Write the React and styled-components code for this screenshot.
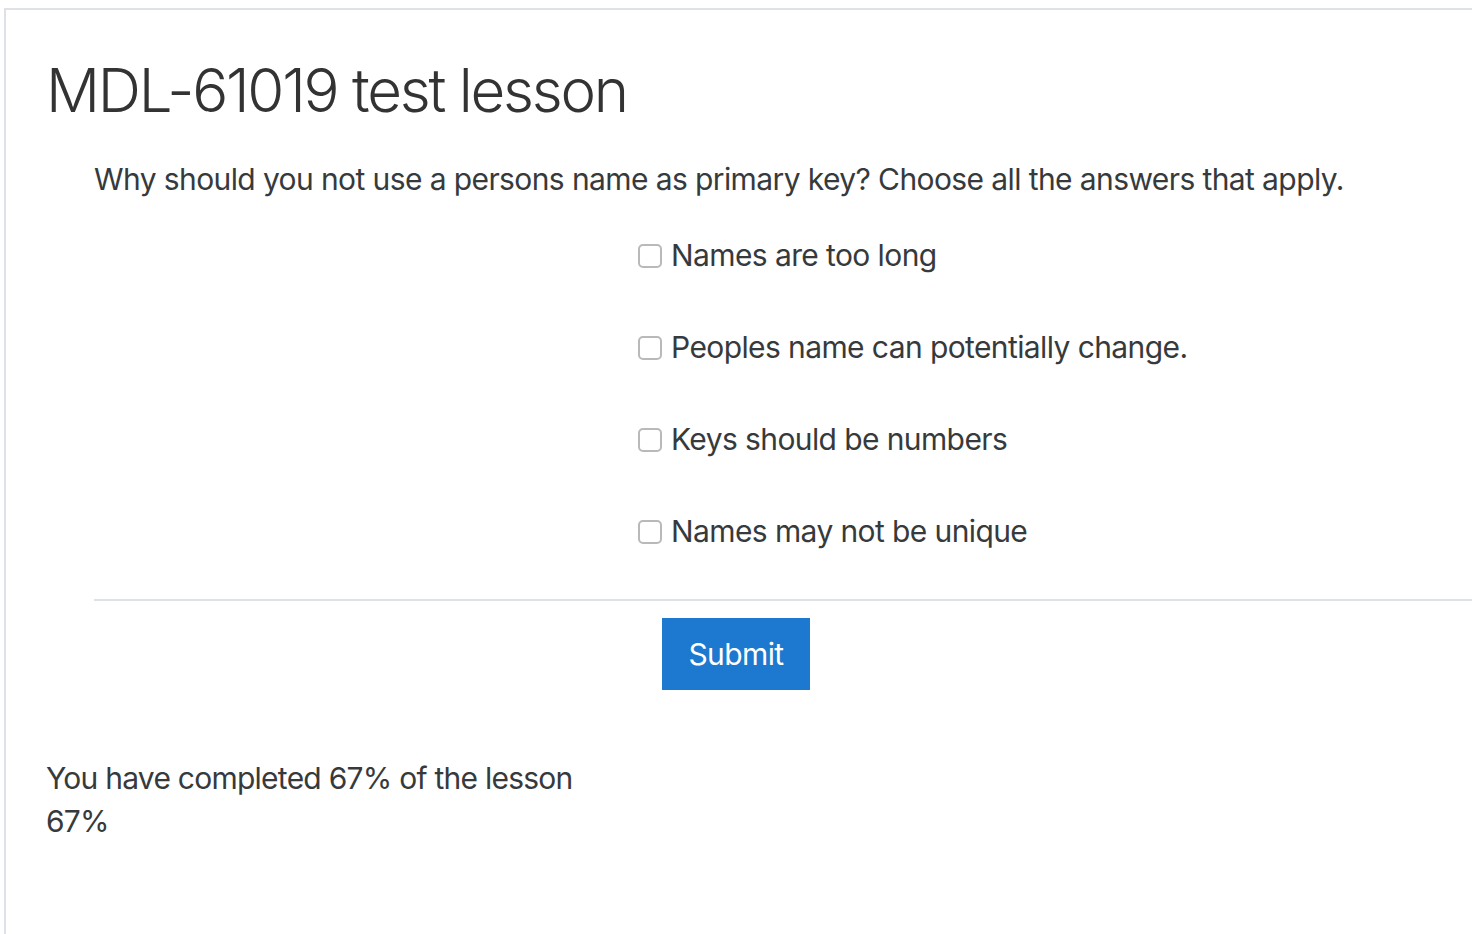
import React from 'react';
import styled, { createGlobalStyle } from 'styled-components';

const GlobalStyle = createGlobalStyle`
  html, body {
    margin: 0;
    padding: 0;
    background: #fff;
    overflow: hidden;
  }
  body {
    font-family: Inter, "Noto Sans", "Liberation Sans", sans-serif;
    color: #373a3c;
    letter-spacing: -0.6px;
  }
`;

const Page = styled.div`
  padding: 8px 0 0 4px;
`;

const Card = styled.section`
  border: 2px solid #dee2e6;
  border-right: none;
  margin-right: -40px;
  min-height: 1000px;
  padding: 44px 0 0 40px;
`;

const Title = styled.h2`
  margin: 0;
  font-size: 60px;
  line-height: 72px;
  font-weight: 300;
  letter-spacing: -2.25px;
  color: #333;
`;

const Form = styled.form`
  margin: 31px 0 0 48px;
`;

const Question = styled.p`
  margin: 0;
  font-size: 30px;
  line-height: 45px;
`;

const Options = styled.div`
  margin: 31px 0 0 544px;
  display: flex;
  flex-direction: column;
  gap: 47px;
`;

const Option = styled.label`
  display: flex;
  align-items: center;
  gap: 9px;
  font-size: 30px;
  line-height: 45px;
`;

const Check = styled.input.attrs({ type: 'checkbox' })`
  appearance: none;
  margin: 0;
  width: 24px;
  height: 24px;
  border: 2px solid #b9b9b9;
  border-radius: 5px;
  background: #fff;
  box-sizing: border-box;
  flex-shrink: 0;
`;

const Divider = styled.hr`
  margin: 45px 0 0 0;
  border: none;
  border-top: 2px solid #dee2e6;
`;

const ButtonRow = styled.div`
  padding: 17px 0 0 568px;
`;

const SubmitButton = styled.button`
  width: 148px;
  height: 72px;
  border: none;
  border-radius: 0;
  background: #1d79cf;
  color: #fff;
  font-family: inherit;
  font-size: 30px;
  letter-spacing: -0.6px;
  cursor: pointer;
`;

const Progress = styled.div`
  margin-top: 67px;
  font-size: 30px;
  line-height: 43px;
  letter-spacing: -0.75px;
`;

const options = [
  'Names are too long',
  'Peoples name can potentially change.',
  'Keys should be numbers',
  'Names may not be unique',
];

export default function App() {
  return (
    <>
      <GlobalStyle />
      <Page>
        <Card>
          <Title>MDL-61019 test lesson</Title>
          <Form onSubmit={(e) => e.preventDefault()}>
            <Question>
              Why should you not use a persons name as primary key? Choose all the answers that apply.
            </Question>
            <Options>
              {options.map((o) => (
                <Option key={o}>
                  <Check />
                  {o}
                </Option>
              ))}
            </Options>
            <Divider />
            <ButtonRow>
              <SubmitButton type="submit">Submit</SubmitButton>
            </ButtonRow>
          </Form>
          <Progress>
            <div>You have completed 67% of the lesson</div>
            <div>67%</div>
          </Progress>
        </Card>
      </Page>
    </>
  );
}
